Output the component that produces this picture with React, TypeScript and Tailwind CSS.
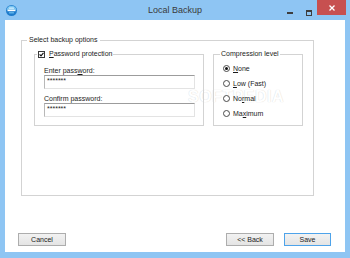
import React from "react";

const Radio = ({ checked, children }: { checked?: boolean; children: React.ReactNode }) => (
  <div className="flex h-[15px] items-center gap-[3px]">
    <span className="flex h-[7px] w-[7px] items-center justify-center rounded-full border border-[#4a4a4a] bg-white">
      {checked && <span className="h-[3px] w-[3px] rounded-full bg-[#111]" />}
    </span>
    <span className="text-[7px] leading-[9px]">{children}</span>
  </div>
);

const PasswordField = ({ label }: { label: React.ReactNode }) => (
  <div>
    <div className="text-[7px] leading-[9px]">{label}</div>
    <div className="h-[14px] w-[151px] border border-[#e3e3e3] border-t-[#9c9c9c] border-l-[#b8b8b8] bg-white pl-[2px] text-[7px] leading-[10px] text-[#222]">
      *******
    </div>
  </div>
);

const Button = ({ children, primary }: { children: React.ReactNode; primary?: boolean }) => (
  <div
    className={
      primary
        ? "h-[13px] w-[47px] border border-[#4ea3ea] bg-linear-to-b from-[#f2f2f2] to-[#e4e4e4] text-center text-[7px] leading-[11px]"
        : "h-[13px] w-[48px] border border-[#adadad] bg-linear-to-b from-[#f2f2f2] to-[#e4e4e4] text-center text-[7px] leading-[11px]"
    }
  >
    {children}
  </div>
);

export default function App() {
  return (
    <div className="relative h-[258px] w-[350px] overflow-hidden bg-[#8ec5f3] font-['Liberation_Sans',Arial,sans-serif] text-[#1b1b1b]">
      {/* title bar */}
      <div className="grid h-[20px] grid-cols-[1fr_auto_1fr]">
        <div className="flex items-start">
          <svg className="ml-[6px] mt-[5px] h-[11px] w-[11px]" viewBox="0 0 11 11">
            <circle cx="5.5" cy="5.5" r="5.5" fill="#1f7ccc" />
            <path d="M0.6 4.8 A5 5 0 0 1 10.4 4.8 Z" fill="#78c4f1" />
            <rect x="1.5" y="4.6" width="8" height="1.6" fill="#ffffff" />
            <rect x="3" y="2.4" width="5" height="1.4" rx="0.5" fill="#d8f0ff" />
            <rect x="3" y="7" width="5" height="1.4" rx="0.5" fill="#5fb3ea" />
          </svg>
        </div>
        <div className="pt-[4px] text-[9px] leading-[12px] text-[#3a3a3a]">Local Backup</div>
        <div className="flex items-start justify-end">
          <div className="mr-[13px] mt-[12px] h-[2px] w-[6px] bg-[#3d3d3d]" />
          <div className="mr-[5px] mt-[10px] h-[6px] w-[6px] border border-t-2 border-[#3d3d3d]" />
          <div className="mr-[4px] flex h-[15px] w-[29px] items-center justify-center bg-[#c75050]">
            <svg className="h-[6px] w-[6px]" viewBox="0 0 6 6">
              <path d="M0.5 0.5 L5.5 5.5 M5.5 0.5 L0.5 5.5" stroke="#ffffff" strokeWidth="1.3" />
            </svg>
          </div>
        </div>
      </div>

      {/* client area */}
      <div className="mx-[5px] flex h-[232px] flex-col bg-white">
        {/* watermark, painted under the dialog controls */}
        <div className="pointer-events-none absolute left-[188px] top-[88px] text-[16px] font-bold leading-[18px] tracking-[0.5px] text-white [text-shadow:0_0_1px_rgba(0,0,0,0.2)]">
          SOFTPEDIA
        </div>

        <fieldset className="relative ml-[16px] mt-[15px] h-[161px] w-[293px] border border-[#d3d3d3]">
          <legend className="ml-[5px] px-[2px] text-[7px] leading-[10px]">Select backup options</legend>
          <div className="flex pl-[12px] pt-[4px]">
            <fieldset className="h-[77px] w-[170px] border border-[#d3d3d3]">
              <legend className="ml-[2px] px-[1px] text-[7px] leading-[10px]">
                <span className="inline-flex items-center gap-[4px]">
                  <span className="relative h-[7px] w-[7px] border border-[#3a3a3a] bg-white">
                    <svg className="absolute left-0 top-0 h-[5px] w-[5px]" viewBox="0 0 5 5">
                      <path d="M0.6 2.4 L2 3.9 L4.5 0.8" stroke="#111" strokeWidth="1.1" fill="none" />
                    </svg>
                  </span>
                  <span>
                    <span className="underline">P</span>assword protection
                  </span>
                </span>
              </legend>
              <div className="flex flex-col gap-[5px] pl-[9px] pt-[5px]">
                <PasswordField
                  label={
                    <>
                      Enter pass<span className="underline">w</span>ord:
                    </>
                  }
                />
                <PasswordField label="Confirm password:" />
              </div>
            </fieldset>

            <fieldset className="ml-[9px] h-[77px] w-[90px] border border-[#d3d3d3]">
              <legend className="ml-[6px] px-[1px] text-[7px] leading-[10px]">Compression level</legend>
              <div className="flex flex-col pl-[9px] pt-[2px]">
                <Radio checked>
                  <span className="underline">N</span>one
                </Radio>
                <Radio>
                  <span className="underline">L</span>ow (Fast)
                </Radio>
                <Radio>
                  No<span className="underline">r</span>mal
                </Radio>
                <Radio>
                  Ma<span className="underline">x</span>imum
                </Radio>
              </div>
            </fieldset>
          </div>
        </fieldset>

        <div className="ml-[13px] mt-[37px] flex w-[313px] justify-between">
          <Button>Cancel</Button>
          <div className="flex gap-[10px]">
            <Button>&lt;&lt; Back</Button>
            <Button primary>Save</Button>
          </div>
        </div>
      </div>
    </div>
  );
}
